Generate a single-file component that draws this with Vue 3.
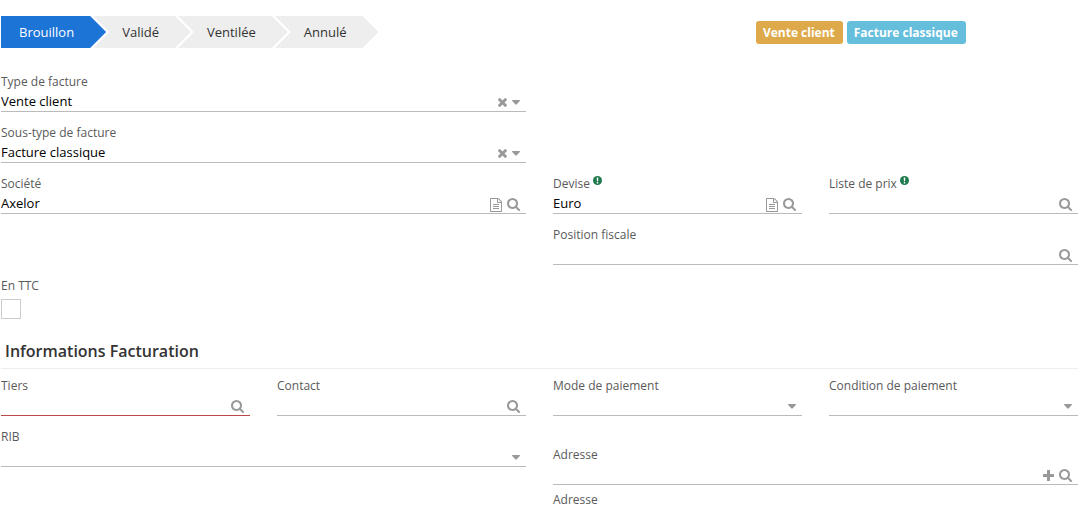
<script setup>
import { ref } from 'vue'

const steps = ['Brouillon', 'Validé', 'Ventilée', 'Annulé']
const current = ref('Brouillon')
const taxIncluded = ref(false)

const mainFields = ref([
  { id: 'type', label: 'Type de facture', value: 'Vente client', kind: 'select', actions: ['clear'], span: 'left' },
  { id: 'subtype', label: 'Sous-type de facture', value: 'Facture classique', kind: 'select', actions: ['clear'], span: 'left' },
  { id: 'company', label: 'Société', value: 'Axelor', kind: 'text', actions: ['doc', 'search'], span: 'left' },
  { id: 'currency', label: 'Devise', value: 'Euro', kind: 'text', actions: ['doc', 'search'], hint: true },
  { id: 'prices', label: 'Liste de prix', value: '', kind: 'text', actions: ['search'], hint: true },
  { id: 'fiscal', label: 'Position fiscale', value: '', kind: 'text', actions: ['search'], span: 'right' }
])

const billingFields = ref([
  { id: 'partner', label: 'Tiers', value: '', kind: 'text', actions: ['search'], required: true },
  { id: 'contact', label: 'Contact', value: '', kind: 'text', actions: ['search'] },
  { id: 'paymode', label: 'Mode de paiement', value: '', kind: 'select', actions: [] },
  { id: 'payterm', label: 'Condition de paiement', value: '', kind: 'select', actions: [] },
  { id: 'rib', label: 'RIB', value: '', kind: 'select', actions: [], span: 'left' },
  { id: 'address', label: 'Adresse', value: '', kind: 'text', actions: ['plus', 'search'], span: 'right', panel: true }
])

const icons = {
  search: { box: '0 128 1664 1664', w: 13, h: 13, name: 'Rechercher', d: 'M1152 832q0-185-131.500-316.500T704 384 387.500 515.500 256 832t131.500 316.500T704 1280t316.500-131.500T1152 832zm512 832q0 52-38 90t-90 38q-54 0-90-38l-343-342q-179 124-399 124-143 0-273.500-55.500t-225-150-150-225T0 832t55.500-273.500 150-225 225-150T704 128t273.500 55.500 225 150 150 225T1408 832q0 220-124 399l343 343q37 37 37 90z' },
  clear: { box: '110 366 1188 1188', w: 9, h: 9, name: 'Effacer', d: 'M1298 1322q0 40-28 68l-136 136q-28 28-68 28t-68-28l-294-294-294 294q-28 28-68 28t-68-28l-136-136q-28-28-28-68t28-68l294-294-294-294q-28-28-28-68t28-68l136-136q28-28 68-28t68 28l294 294 294-294q28-28 68-28t68 28l136 136q28 28 28 68t-28 68l-294 294 294 294q28 28 28 68z' },
  doc: { box: '0 0 1536 1792', w: 12, h: 14, name: 'Ouvrir', d: 'M1468 380q28 28 48 76t20 88v1152q0 40-28 68t-68 28H96q-40 0-68-28t-28-68V96q0-40 28-68T96 0h896q40 0 88 20t76 48zm-444-244v376h376q-10-29-22-41l-313-313q-12-12-41-22zm384 1528V640H992q-40 0-68-28t-28-68V128H128v1536h1280zM384 800q0-14 9-23t23-9h704q14 0 23 9t9 23v64q0 14-9 23t-23 9H416q-14 0-23-9t-9-23v-64zm736 224q14 0 23 9t9 23v64q0 14-9 23t-23 9H416q-14 0-23-9t-9-23v-64q0-14 9-23t23-9h704zm0 256q14 0 23 9t9 23v64q0 14-9 23t-23 9H416q-14 0-23-9t-9-23v-64q0-14 9-23t23-9h704z' },
  plus: { box: '0 0 11 11', w: 11, h: 11, name: 'Ajouter', d: 'M4.500 0h2q.5 0 .5.500V4h3.500q.5 0 .5.500v2q0 .5-.5.500H7v3.500q0 .5-.5.500h-2q-.5 0-.5-.500V7H.500q-.5 0-.5-.500v-2q0-.5.500-.500H4V.500q0-.5.500-.500z' }
}

function act(field, action) {
  if (action === 'clear') field.value = ''
}
</script>

<template>
  <main class="form">
    <header class="top">
      <nav class="steps" aria-label="Statut">
        <button
          v-for="step in steps"
          :key="step"
          type="button"
          class="step"
          :class="{ active: step === current }"
          @click="current = step"
        >{{ step }}</button>
      </nav>
      <div class="badges">
        <span class="badge amber">Vente client</span>
        <span class="badge sky">Facture classique</span>
      </div>
    </header>

    <template v-for="(group, g) in [mainFields, billingFields]" :key="g">
      <h2 v-if="g === 1" class="heading">Informations Facturation</h2>
      <section class="grid">
        <div v-for="f in group" :key="f.id" class="field" :class="[f.span, { panel: f.panel }]">
          <label class="label" :for="f.id">
            {{ f.label }}
            <svg v-if="f.hint" class="hint" width="9" height="9" viewBox="0 0 9 9" aria-hidden="true">
              <circle cx="4.5" cy="4.500" r="4.500" fill="#1f7a4d" />
              <path d="M3.700 1.500h1.600L5.100 5.200H3.900zM3.800 6h1.400v1.400H3.800z" fill="#fff" />
            </svg>
          </label>
          <div class="control" :class="{ required: f.required }">
            <select v-if="f.kind === 'select'" :id="f.id" v-model="f.value" class="input choice">
              <option value=""></option>
              <option v-if="f.value">{{ f.value }}</option>
            </select>
            <input v-else :id="f.id" v-model="f.value" class="input" type="text" autocomplete="off" />
            <span class="actions">
              <button
                v-for="a in f.actions"
                :key="a"
                type="button"
                class="action"
                :aria-label="icons[a].name"
                @click="act(f, a)"
              >
                <svg :width="icons[a].w" :height="icons[a].h" :viewBox="icons[a].box" aria-hidden="true">
                  <path :d="icons[a].d" fill="currentColor" />
                </svg>
              </button>
              <svg v-if="f.kind === 'select'" class="caret" width="8" height="5" viewBox="0 0 8 5" aria-hidden="true">
                <path d="M.5 0h7q.8.300.3.900L4.500 4.400q-.5.400-1 0L.200.900Q-.3.300.5 0z" fill="currentColor" />
              </svg>
            </span>
          </div>
        </div>

        <div v-if="g === 0" class="field left">
          <label class="label" for="tax">En TTC</label>
          <input id="tax" v-model="taxIncluded" class="check" type="checkbox" />
        </div>
      </section>
    </template>

    <section class="grid detail">
      <span class="label right">Adresse</span>
    </section>
  </main>
</template>

<style>
body {
  margin: 0;
  background: #fff;
}
</style>

<style scoped>
.form {
  padding: 16px 2px 0 1px;
  font-family: "Open Sans", "Noto Sans", sans-serif;
  font-size: 13px;
  line-height: 20px;
  color: #333;
}
.top {
  display: grid;
  grid-template-columns: 70% 1fr;
  column-gap: 1px;
  align-items: center;
  margin-bottom: 24px;
}
.steps {
  display: flex;
}
.step {
  height: 32px;
  margin: 0 0 0 -13px;
  padding: 0 32px 0 29px;
  border: 0;
  background: #eee;
  color: #333;
  font: inherit;
  cursor: pointer;
  clip-path: polygon(0 0, calc(100% - 16px) 0, 100% 50%, calc(100% - 16px) 100%, 0 100%, 16px 50%);
}
.step:first-child {
  margin-left: 0;
  padding: 0 32px 0 18px;
  clip-path: polygon(0 0, calc(100% - 16px) 0, 100% 50%, calc(100% - 16px) 100%, 0 100%);
}
.step.active {
  background: #1c74d6;
  color: #fff;
}
.badges {
  display: flex;
  gap: 4px;
}
.badge {
  padding: 0 8px 0 7px;
  border-radius: 3px;
  color: #fff;
  font-size: 12px;
  font-weight: 700;
  line-height: 23px;
  white-space: nowrap;
}
.amber {
  background: #dea94a;
}
.sky {
  background: #64bedc;
}
.grid {
  display: grid;
  grid-template-columns: repeat(4, minmax(0, 1fr));
  column-gap: 27px;
  row-gap: 11px;
  align-items: start;
}
.left {
  grid-column: 1 / span 2;
}
.right {
  grid-column: 3 / span 2;
}
.panel {
  padding-top: 18px;
}
.label {
  display: block;
  color: #5a5a5a;
  font-size: 12px;
  line-height: 20px;
}
.hint {
  vertical-align: 3px;
}
.control {
  display: grid;
  align-items: center;
  height: 19px;
  border-bottom: 1px solid #bbb;
}
.control.required {
  border-bottom-color: #b94a48;
}
.input {
  grid-area: 1 / 1;
  box-sizing: border-box;
  width: 100%;
  height: 19px;
  margin: 0;
  padding: 0 0 2px;
  border: 0;
  outline: 0;
  appearance: none;
  background: transparent;
  color: #000;
  font: inherit;
  line-height: 17px;
}
.choice {
  padding: 0;
}
.actions {
  grid-area: 1 / 1;
  justify-self: end;
  display: flex;
  align-items: center;
  gap: 5px;
  padding: 2px 6px 0 0;
  color: #999;
  pointer-events: none;
}
.action {
  display: block;
  padding: 0;
  border: 0;
  background: none;
  color: inherit;
  line-height: 0;
  pointer-events: auto;
  cursor: pointer;
}
.action svg,
.caret {
  display: block;
}
.check {
  display: block;
  width: 20px;
  height: 20px;
  margin: 3px 0 0;
  border: 1px solid #ccc;
  appearance: none;
  background: #fff;
}
.check:checked {
  background: #1c74d6;
}
.heading {
  margin: 16px 0 7px;
  padding: 0 4px 1px;
  border-bottom: 1px solid #eee;
  font-size: 16px;
  font-weight: 600;
  line-height: 32px;
  color: #333;
}
.detail {
  margin-top: 5px;
}
</style>
